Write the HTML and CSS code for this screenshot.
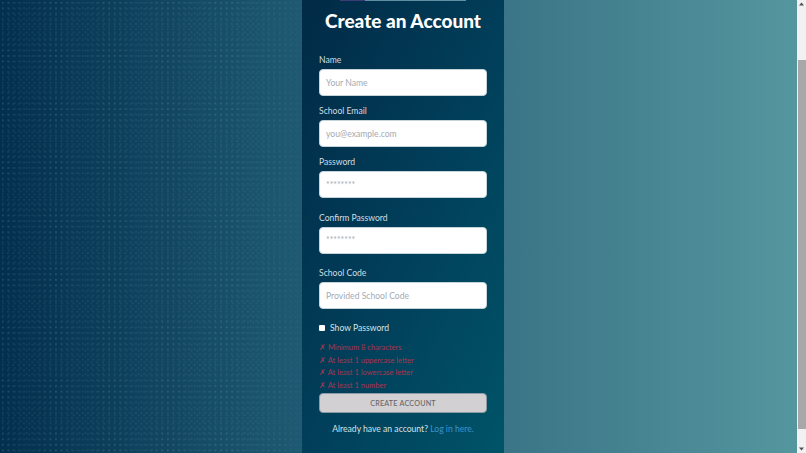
FILE: index.html
```html
<!DOCTYPE html>
<html lang="en">
<head>
<meta charset="utf-8">
<title>Create an Account</title>
<link rel="stylesheet" href="styles.css">
</head>
<body>
<div class="viewport">
  <main class="page">
    <section class="panel">
      <div class="topbar"><span class="topbar-start"></span></div>
      <h1>Create an Account</h1>
      <form class="form">
        <div class="field"><label for="n">Name</label><input id="n" placeholder="Your Name"></div>
        <div class="field"><label for="e">School Email</label><input id="e" placeholder="you@example.com"></div>
        <div class="field wide"><label for="p">Password</label><input id="p" placeholder="********"></div>
        <div class="field wide"><label for="c">Confirm Password</label><input id="c" placeholder="********"></div>
        <div class="field"><label for="s">School Code</label><input id="s" placeholder="Provided School Code"></div>
        <label class="show"><input type="checkbox"><span>Show Password</span></label>
        <ul class="rules">
          <li>✗ Minimum 8 characters</li>
          <li>✗ At least 1 uppercase letter</li>
          <li>✗ At least 1 lowercase letter</li>
          <li>✗ At least 1 number</li>
        </ul>
        <button type="button">CREATE ACCOUNT</button>
      </form>
      <p class="login">Already have an account? <a href="#">Log in here.</a></p>
    </section>
  </main>
  <aside class="scrollbar">
    <svg class="arrow" viewBox="0 0 9 6" width="9" height="6"><path d="M4.500 1.500 7 4.500H2z"/></svg>
    <div class="track"><div class="thumb"></div></div>
    <svg class="arrow" viewBox="0 0 9 6" width="9" height="6"><path d="M2 1.500h5L4.500 4.500z"/></svg>
  </aside>
</div>
</body>
</html>
```
FILE: styles.css
```css
* { box-sizing: border-box; }
html, body { margin: 0; height: 100%; overflow: hidden; }
body { font-family: Lato, "Noto Sans", sans-serif; color: #fff; }
.viewport { position: relative; width: 806px; height: 453px; }
.page {
  position: relative;
  height: 453px;
  display: flex;
  justify-content: center;
  background: linear-gradient(90deg, #022f4d 0%, #1f5a72 38%, #3a7486 62%, #55979f 100%);
}
.page::before {
  content: "";
  position: absolute;
  inset: 0;
  background:
    radial-gradient(circle, rgba(170,215,230,.1) .6px, transparent 1px) 0 0 / 5.33px 5.33px,
    radial-gradient(circle, rgba(170,215,230,.1) .6px, transparent 1px) 0 0 / 5.9px 5.9px;
  -webkit-mask-image: linear-gradient(90deg, #000 0%, #000 30%, rgba(0,0,0,.35) 38%, transparent 66%);
  mask-image: linear-gradient(90deg, #000 0%, #000 30%, rgba(0,0,0,.35) 38%, transparent 66%);
}
.panel {
  position: relative;
  width: 202px;
  height: 453px;
  padding: 0 17px;
  background: linear-gradient(115deg, #012a46 0%, #01405b 55%, #005468 100%);
}
.topbar {
  position: absolute;
  top: 0; left: 38px;
  width: 126px; height: 1px;
  background: #5f8fa0;
}
.topbar-start { display: block; width: 25px; height: 1px; background: #3d3a78; }
h1 {
  margin: 0;
  padding-top: 7px;
  height: 52px;
  font-size: 19px;
  line-height: 27px;
  font-weight: 900;
  text-align: center;
  white-space: nowrap;
}
.form { display: flex; flex-direction: column; }
.field { display: flex; flex-direction: column; height: 51px; }
.field.wide { height: 55.5px; }
.field label {
  font-size: 8.6px;
  line-height: 16px;
  color: #cfdde3;
}
.field input {
  width: 168px;
  height: 27px;
  margin-top: 1px;
  padding: 0 6px;
  border: 1px solid #c5d3da;
  border-radius: 4px;
  background: #fff;
  font: 8.6px Lato, sans-serif;
  color: #333;
  outline: none;
}
.field input::placeholder { color: #a3abb5; opacity: 1; }
.show {
  display: flex;
  align-items: center;
  gap: 5px;
  height: 18px;
  margin-top: 3px;
  font-size: 8.6px;
  color: #d5e2e8;
}
.show input { width: 6px; height: 6px; margin: 0; appearance: none; background: #fff; border-radius: 1px; }
.rules {
  list-style: none;
  margin: 5px 0 0;
  padding: 0;
  font-size: 7.5px;
  line-height: 12.5px;
  color: #a8364f;
}
button {
  width: 168px;
  height: 20px;
  margin-top: 1px;
  padding: 0;
  border: 1px solid #8b9aa3;
  border-radius: 4px;
  background: #d3d0d4;
  color: #666;
  font: 500 7.2px Lato, sans-serif;
  letter-spacing: .2px;
}
.login {
  margin: 9px 0 0;
  font-size: 8.6px;
  line-height: 15px;
  text-align: center;
  color: #d5e2e8;
  white-space: nowrap;
}
.login a { color: #3c93d0; text-decoration: none; }
.scrollbar {
  position: absolute;
  top: 0; right: 0;
  width: 9px;
  height: 453px;
  display: flex;
  flex-direction: column;
  background: #f1f1f1;
}
.arrow { display: block; margin: 1px 0; fill: #505050; }
.track { flex: 1; padding-top: 52px; }
.thumb { height: 369px; background: #a8a8a8; margin-left: 1px; }
```
